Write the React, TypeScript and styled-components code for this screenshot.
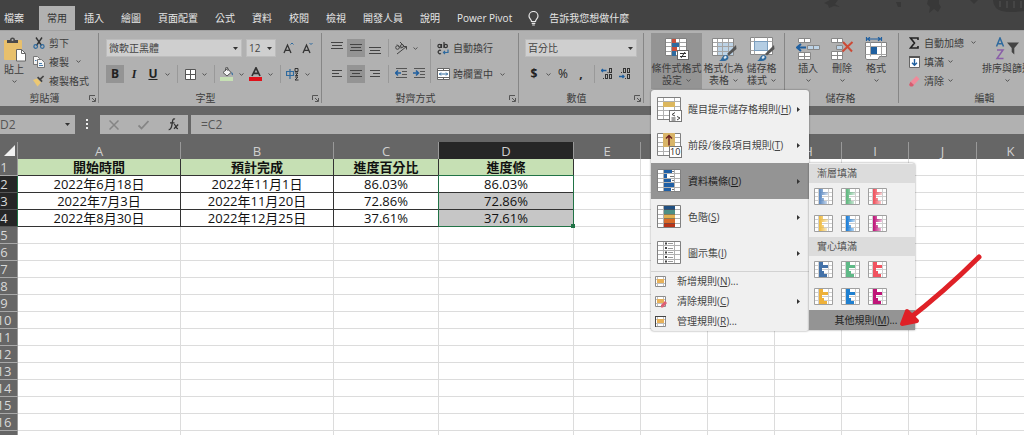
import React from 'react';
import styled, { createGlobalStyle } from 'styled-components';

const GlobalStyle = createGlobalStyle`
  *, *::before, *::after { box-sizing: border-box; }
  body {
    margin: 0;
    background: #fff;
    font-family: "Open Sans", "Noto Sans CJK TC", sans-serif;
    font-size: 10px;
    line-height: 12px;
    color: #3c3c3c;
  }
  button, input, select { font: inherit; color: inherit; }
  button { border: 0; padding: 0; background: none; white-space: nowrap; }
  svg { display: block; flex: none; }
`;

/* ---------- shell ---------- */

const Window = styled.div`
  display: flex;
  flex-direction: column;
  height: 100vh;
  overflow: hidden;
`;

const TabBar = styled.nav`
  display: flex;
  align-items: flex-end;
  flex: none;
  gap: 1px;
  height: 30px;
  background: #434343;
`;

const Tab = styled.button<{ $active?: boolean; $first?: boolean }>`
  flex: none;
  height: 24px;
  padding: 0 8px;
  padding-left: ${(p) => (p.$first ? '4px' : '8px')};
  margin-right: ${(p) => (p.$first ? '6px' : '0')};
  background: ${(p) => (p.$active ? '#b1b1b1' : 'transparent')};
  color: ${(p) => (p.$active ? '#333' : '#e6e6e6')};
`;

const TellMe = styled.button`
  display: flex;
  align-items: center;
  flex: none;
  gap: 10px;
  height: 24px;
  margin-left: 7px;
  color: #e6e6e6;
`;

const Doodles = styled.div`
  align-self: flex-start;
  margin-left: auto;
`;

/* ---------- ribbon ---------- */

const Ribbon = styled.div`
  display: flex;
  flex: none;
  height: 76px;
  border-top: 1px solid #a2a2a2;
  background: #b1b1b1;
`;

const GroupBox = styled.section<{ $width: number }>`
  position: relative;
  display: flex;
  flex-direction: column;
  flex: none;
  width: ${(p) => p.$width}px;
  &::after {
    content: "";
    position: absolute;
    top: 2px;
    right: 0;
    width: 1px;
    height: 70px;
    background: #868686;
  }
`;

const GroupBody = styled.div<{ $pad?: number }>`
  display: flex;
  height: 59px;
  padding: 2px 0 0 ${(p) => p.$pad ?? 0}px;
`;

const GroupFoot = styled.div`
  display: flex;
  align-items: center;
  height: 16px;
  padding-right: 3px;
`;

const GroupTitle = styled.span`
  flex: 1;
  text-align: center;
`;

const Launcher = styled.button`
  width: 7px;
  height: 7px;
`;

const Rows = styled.div`
  display: flex;
  flex-direction: column;
  gap: 8px;
  padding-top: 6px;
`;

const TightRows = styled.div<{ $indent?: boolean }>`
  display: flex;
  flex-direction: column;
  margin-left: ${(p) => (p.$indent ? '5px' : '0')};
`;

const Row = styled.div<{ $gap?: number }>`
  display: flex;
  align-items: center;
  height: 18px;
  gap: ${(p) => p.$gap ?? 0}px;
`;

const Tool = styled.button<{ $on?: boolean }>`
  display: flex;
  align-items: center;
  justify-content: center;
  width: 18px;
  height: 18px;
  background: ${(p) => (p.$on ? '#949494' : 'transparent')};
`;

const Glyph = styled.span<{ $kind?: 'bold' | 'italic' | 'under' }>`
  font-size: 12px;
  line-height: 14px;
  color: #222;
  font-weight: ${(p) => (p.$kind === 'bold' || p.$kind === 'under' ? 700 : 400)};
  font-style: ${(p) => (p.$kind === 'italic' ? 'italic' : 'normal')};
  font-family: ${(p) => (p.$kind === 'italic' ? '"Liberation Serif", serif' : 'inherit')};
  text-decoration: ${(p) => (p.$kind === 'under' ? 'underline' : 'none')};
`;

const DropButton = styled.button`
  display: flex;
  align-items: center;
  justify-content: center;
  width: 11px;
  height: 18px;
`;

const Divider = styled.i<{ $tall?: boolean }>`
  flex: none;
  width: 1px;
  height: ${(p) => (p.$tall ? '44px' : '18px')};
  margin: ${(p) => (p.$tall ? '6px 6px 0 2px' : '0 3px 0 4px')};
  background: #999;
`;

const LabelTool = styled.button<{ $h?: number }>`
  display: flex;
  align-items: center;
  gap: 4px;
  height: ${(p) => p.$h ?? 19}px;
`;

const IconSlot = styled.span`
  display: flex;
  justify-content: center;
  width: 12px;
`;

const BigTool = styled.button<{ $width: number; $on?: boolean }>`
  display: flex;
  flex-direction: column;
  align-items: center;
  flex: none;
  gap: 1px;
  width: ${(p) => p.$width}px;
  height: 56px;
  padding-top: 4px;
  background: ${(p) => (p.$on ? '#949494' : 'transparent')};
`;

const BigLabel = styled.span`
  display: flex;
  flex-direction: column;
  align-items: center;
`;

const LabelLine = styled.span`
  display: flex;
  align-items: center;
  justify-content: center;
  gap: 4px;
  height: 12px;
`;

const ComboBox = styled.span<{ $width: number }>`
  position: relative;
  display: flex;
  width: ${(p) => p.$width}px;
  height: 18px;
  select {
    appearance: none;
    width: 100%;
    height: 18px;
    padding: 0 12px 0 2px;
    border: 1px solid #bdbdbd;
    border-radius: 0;
    background: #cfcfcf;
    color: #444;
  }
  svg {
    position: absolute;
    right: 4px;
    top: 8px;
    pointer-events: none;
  }
`;

/* ---------- menus ---------- */

const MenuAnchor = styled.div`
  position: relative;
  z-index: 5;
`;

const Menu = styled.div`
  position: absolute;
  top: 57px;
  left: 0;
  width: 158px;
  padding-top: 1px;
  background: #f0f0f0;
  border-radius: 3px;
  box-shadow: 0 0 2px rgba(0, 0, 0, 0.5);
`;

const MenuRow = styled.div`
  position: relative;
`;

const MenuItem = styled.button<{ $small?: boolean; $on?: boolean }>`
  display: flex;
  align-items: center;
  width: 100%;
  height: ${(p) => (p.$small ? '20px' : '36px')};
  padding: ${(p) => (p.$small ? '0 9px 0 4px' : '0 9px 0 6px')};
  gap: ${(p) => (p.$small ? '10px' : '6px')};
  background: ${(p) => (p.$on ? '#949494' : 'transparent')};
  color: ${(p) => (p.$on ? '#1e1e1e' : '#444')};
`;

const MenuText = styled.span`
  flex: 1;
  text-align: left;
`;

const MenuLine = styled.hr`
  height: 1px;
  margin: 0 0 -1px;
  border: 0;
  background: #d2d2d2;
`;

const SubMenu = styled.div`
  position: absolute;
  top: 0;
  left: 100%;
  width: 106px;
  padding-top: 1px;
  background: #f0f0f0;
  border-radius: 0 3px 0 0;
  box-shadow: 0 0 2px rgba(0, 0, 0, 0.5);
`;

const SubTitle = styled.div`
  height: 19px;
  padding: 3px 8px;
  background: #dcdcdc;
  color: #555;
`;

const Swatches = styled.div`
  display: grid;
  grid-template-columns: repeat(3, 27px);
  grid-auto-rows: 27px;
  padding-left: 1px;
`;

const Swatch = styled.button`
  display: flex;
  align-items: center;
  justify-content: center;
`;

const MoreRules = styled.button`
  width: 100%;
  height: 20px;
  padding-left: 8px;
  background: #949494;
  color: #222;
`;

const Pointer = styled.svg`
  position: absolute;
  left: 88px;
  top: 88px;
  pointer-events: none;
`;

/* ---------- formula bar ---------- */

const FormulaBar = styled.div`
  display: flex;
  flex: none;
  align-items: center;
  height: 36px;
  border-bottom: 8px solid #666;
  border-top: 9px solid #666;
  background: #666;
`;

const NameBox = styled.label`
  display: flex;
  align-items: center;
  flex: none;
  width: 75px;
  height: 19px;
  padding-right: 5px;
  background: #b1b1b1;
  input {
    width: 62px;
    flex: 1;
    padding: 0;
    border: 0;
    background: transparent;
    font-size: 12px;
    color: #555;
  }
`;

const Grip = styled.span`
  display: flex;
  justify-content: center;
  flex: none;
  width: 25px;
`;

const FxBox = styled.div`
  display: flex;
  align-items: center;
  justify-content: space-around;
  flex: none;
  width: 88px;
  height: 19px;
  margin-right: 3px;
  background: #b1b1b1;
`;

const FormulaInput = styled.input`
  flex: 1;
  min-width: 0;
  height: 19px;
  padding: 0 10px;
  border: 0;
  border-radius: 0;
  background: #b1b1b1;
  font-size: 12px;
  color: #555;
`;

/* ---------- sheet ---------- */

const SheetArea = styled.main`
  flex: 1;
  min-height: 0;
  overflow: hidden;
`;

const Sheet = styled.table`
  width: 100%;
  min-width: 1045px;
  table-layout: fixed;
  border-collapse: separate;
  border-spacing: 0;
  font-size: 13px;
  line-height: 16px;
  th, td { padding: 0; height: 17px; white-space: nowrap; }
`;

const ColHead = styled.th<{ $on?: boolean }>`
  border-right: 1px solid #999;
  background: ${(p) => (p.$on ? '#262626' : '#666')};
  color: #d0d0d0;
  font-weight: 400;
`;

const Corner = styled.td`
  background: #666;
  border-right: 1px solid #999;
  svg { margin: 0 0 0 4px; }
`;

const RowHead = styled.th<{ $on?: boolean }>`
  border-right: 1px solid ${(p) => (p.$on ? '#217346' : '#999')};
  border-bottom: 1px solid ${(p) => (p.$on ? '#555' : '#a8a8a8')};
  background: ${(p) => (p.$on ? '#262626' : '#666')};
  color: #d8d8d8;
  font-weight: 400;
`;

const RowNumber = styled.span`
  display: flex;
  justify-content: center;
  width: 8px;
`;

const Cell = styled.td<{ $kind: 'blank' | 'head' | 'data' | 'picked' }>`
  position: relative;
  text-align: center;
  color: #111;
  font-weight: ${(p) => (p.$kind === 'head' ? 700 : 400)};
  border-right: 1px solid ${(p) => (p.$kind === 'blank' ? '#dcdcdc' : '#333')};
  border-bottom: 1px solid ${(p) => (p.$kind === 'blank' ? '#dcdcdc' : '#333')};
  background: ${(p) => ({ blank: '#fff', head: '#c6e0b4', data: '#fff', picked: '#c6c6c6' })[p.$kind]};
`;

const Selection = styled.div`
  position: absolute;
  z-index: 1;
  top: -1px;
  left: -1px;
  right: -1px;
  height: 52px;
  border: 1px solid #217346;
  &::after {
    content: "";
    position: absolute;
    right: -2px;
    bottom: -2px;
    width: 4px;
    height: 4px;
    background: #217346;
  }
`;

/* ---------- icons ---------- */

const Chevron = () => (
  <svg width="5" height="3" viewBox="0 0 5 3">
    <path d="M.5.500l2 1.800 2-1.800" fill="none" stroke="#555" />
  </svg>
);
const Caret = () => (
  <svg width="5" height="3" viewBox="0 0 5 3">
    <path d="M0 0h5L2.500 3z" fill="#333" />
  </svg>
);
const SubArrow = () => (
  <svg width="3" height="5" viewBox="0 0 3 5">
    <path d="M0 0v5l3-2.500z" fill="#333" />
  </svg>
);
const LaunchIcon = () => (
  <svg width="7" height="7" viewBox="0 0 7 7" fill="none" stroke="#555">
    <path d="M.5 5V.5H6M3 3l3 3M6.500 3v3.500H3" />
  </svg>
);
const Bulb = () => (
  <svg width="11" height="15" viewBox="0 0 11 15" fill="none" stroke="#e6e6e6" strokeWidth="1.200">
    <path d="M3.500 10.500C3.500 8.500 1 7.800 1 5a4.500 4.500 0 019 0c0 2.800-2.500 3.500-2.500 5.500zM3.700 12.300h3.600M4.200 14h2.600" />
  </svg>
);
const PasteIcon = () => (
  <svg width="23" height="25" viewBox="0 0 23 25">
    <rect x="1" y="3" width="18" height="20" rx="1" fill="#e8c06c" />
    <path d="M4 6V3h3a2.500 2.500 0 015 0h3v3z" fill="#4a4a4a" />
    <circle cx="9.500" cy="3" r="1" fill="#b1b1b1" />
    <path d="M13.500 12.500h5l4 4v7.500h-9z" fill="#fff" stroke="#666" />
    <path d="M18.500 12.500v4h4" fill="none" stroke="#666" />
  </svg>
);
const CutIcon = () => (
  <svg width="12" height="12" viewBox="0 0 12 12" fill="none">
    <path d="M3 .5l5.500 8M9 .5l-5.500 8" stroke="#333" strokeWidth="1.400" />
    <circle cx="2.700" cy="9.500" r="1.800" stroke="#2f6a9e" strokeWidth="1.200" />
    <circle cx="9.300" cy="9.500" r="1.800" stroke="#2f6a9e" strokeWidth="1.200" />
  </svg>
);
const CopyIcon = () => (
  <svg width="12" height="12" viewBox="0 0 12 12" fill="#f4f4f4" stroke="#777">
    <path d="M.5.500h4l2 2v6h-6z" />
    <path d="M4.500 3.500h4l3 3v5h-7z" />
    <path d="M6 7.500h3M6 9.500h4M2 4.500h1.500" stroke="#4a7fb0" />
  </svg>
);
const PainterIcon = () => (
  <svg width="12" height="12" viewBox="0 0 12 12">
    <path d="M0 5l4-1.500 4 4L4.500 11.500z" fill="#ecc873" />
    <path d="M4 2.800l4.500 4.500 1.200-1.200-1.500-1.600 3-3L10 .4 7 3.200 5.200 1.600z" fill="#444" />
  </svg>
);
const GrowA = ({ up }: { up?: boolean }) => (
  <svg width="12" height="12" viewBox="0 0 12 12" fill="none">
    <path d="M1 11L4.500 3 8 11M2.300 8.300h4.400" stroke="#333" strokeWidth="1.300" />
    <path d={up ? 'M7.500 2.500L9 1l1.500 1.500' : 'M7.500 1L9 2.500 10.500 1'} stroke="#2f6a9e" />
  </svg>
);
const BorderIcon = () => (
  <svg width="11" height="11" viewBox="0 0 11 11">
    <path d="M.5.500h10v10H.5zM5.500.500v10M.5 5.500h10" fill="#fff" stroke="#555" />
  </svg>
);
const FillIcon = () => (
  <svg width="14" height="14" viewBox="0 0 14 14">
    <rect y="10" width="13" height="4" fill="#c6e0b4" />
    <path d="M3 5.500L7.500 1.500 11 5.500 7 9z" fill="#f4f4f4" stroke="#555" />
    <path d="M5.500 4V1.500a1.200 1.200 0 012.400 0v2.500" fill="none" stroke="#555" />
    <path d="M11.500 4.500q2 2 1 4-1.500-1-1-4z" fill="#2f6a9e" />
  </svg>
);
const FontColorIcon = () => (
  <svg width="14" height="14" viewBox="0 0 14 14">
    <path d="M3 9L7 .8 11 9M4.500 6.300h5" fill="none" stroke="#333" strokeWidth="1.700" />
    <rect x="0" y="10" width="13" height="4" fill="#e0111a" />
  </svg>
);
const PhoneticIcon = () => (
  <svg width="14" height="14" viewBox="0 0 14 14" fill="none">
    <path d="M.5 4.500h7v4h-7zM4 2v10" stroke="#2f6a9e" strokeWidth="1.200" />
    <path d="M9 1.500h3v3H9zM9 6h3L9.500 8.500H12M9 10h3l-3 3h3.500" stroke="#333" />
  </svg>
);
const Lines = ({ rows }: { rows: [number, number, number][] }) => (
  <svg width="12" height="12" viewBox="0 0 12 12" stroke="#444">
    {rows.map(([y, a, b]) => (
      <path key={y} d={`M${a} ${y}.5H${b}`} />
    ))}
  </svg>
);
const OrientIcon = () => (
  <svg width="14" height="14" viewBox="0 0 14 14" fill="none" stroke="#444">
    <path d="M3 13L12.500 5.500M9.500 5.500h3v3" />
    <circle cx="3.500" cy="6.500" r="1.800" />
    <path d="M3 3.500l4 4M6 1l4 4" />
    <circle cx="8" cy="5" r="1.500" />
  </svg>
);
const IndentIcon = ({ right }: { right?: boolean }) => (
  <svg width="13" height="12" viewBox="0 0 13 12" fill="none">
    <path d="M1 .5h11M7 3.500h5M7 6.500h5M1 9.500h11" stroke="#555" />
    <path d={right ? 'M0 5h5M3 2.500L5.500 5 3 7.500' : 'M6 5H1M3 2.500L.5 5 3 7.500'} stroke="#1f5f9f" strokeWidth="1.500" />
  </svg>
);
const WrapIcon = () => (
  <svg width="12" height="13" viewBox="0 0 12 13" fill="none" stroke="#333" strokeWidth="1.200">
    <circle cx="2.500" cy="4" r="1.600" />
    <path d="M4.500 2v4M7 0v6" />
    <circle cx="8.800" cy="4" r="1.600" />
    <path d="M4 8.500a1.800 1.800 0 100 3" />
    <path d="M11 7.500v3H6.500M8 9L6.500 10.500 8 12" stroke="#2f6a9e" />
  </svg>
);
const MergeIcon = () => (
  <svg width="13" height="12" viewBox="0 0 13 12" fill="#fff">
    <path d="M.5.500h12v11H.5zM.5 2.500h12M.5 9.500h12M6.500.500v2M6.500 9.500v2" stroke="#666" />
    <path d="M2 6h9M4 4.500L2.500 6 4 7.500M9 4.500L10.500 6 9 7.500" fill="none" stroke="#2f6a9e" />
  </svg>
);
const DecimalIcon = ({ less }: { less?: boolean }) => (
  <svg width="12" height="12" viewBox="0 0 12 12" fill="none" stroke="#333">
    <rect x="8.500" y=".5" width="2" height="4" />
    {less ? <rect x="4.500" y=".5" width="2" height="4" /> : <rect x="4.500" y="6.500" width="2" height="4" />}
    <rect x="8.500" y="6.500" width="2" height="4" />
    <path d={less ? 'M0 8.500h5M3.500 7L5 8.500 3.500 10' : 'M5.500 2.500H.5M2 1L.5 2.500 2 4'} stroke="#1f5f9f" strokeWidth="1.300" />
    <path d={less ? 'M2 4.500h1M6 10.500h1' : 'M6.500 4.500h1M2 10.500h1'} />
  </svg>
);

const CondIcon = () => (
  <svg width="24" height="24" viewBox="0 0 24 24">
    <path d="M.5 1.500h21v17H.5z" fill="#fff" />
    <path d="M.5 5.500h21M.5 9.500h21M.5 14.500h21M6.500 1.500v17M14.500 1.500v17" fill="none" stroke="#a0a0a0" />
    <path d="M.5 1.500h21v17H.5z" fill="none" stroke="#808080" />
    <path d="M7 2h4v4H7zM7 10h5v4H7z" fill="#c8503c" />
    <path d="M7 6h7v4H7zM7 14h4v5H7z" fill="#2f6a9e" />
    <rect x="12.500" y="13.500" width="11" height="9" fill="#fff" stroke="#666" />
    <path d="M15 16.500h6M15 19.500h6M20 15l-4 6" stroke="#333" />
  </svg>
);
const Brush = () => (
  <>
    <path d="M25 8l-9 9 2 1.500L25.500 12z" fill="#555" />
    <path d="M8 24c3-1 3-6 6.500-6 3 0 4 3 1.500 5-2 1.500-5 1-8 1z" fill="#2f6a9e" />
    <path d="M14 18.500l2 1.500-2 2-1.500-1z" fill="#dfe9f2" />
  </>
);
const TableIcon = () => (
  <svg width="26" height="24" viewBox="0 0 26 24">
    <path d="M1.500 1.500h21v17h-21z" fill="#fff" />
    <path d="M7 6h15v12H7z" fill="#bdd3e6" />
    <path d="M1.500 5.500h21M1.500 9.500h21M1.500 14.500h21M6.500 1.500v17M11.500 1.500v17M17.500 1.500v17" fill="none" stroke="#a4a4a4" />
    <path d="M1.500 1.500h21v17h-21z" fill="none" stroke="#888" />
    <Brush />
  </svg>
);
const StyleIcon = () => (
  <svg width="26" height="24" viewBox="0 0 26 24">
    <path d="M1.500.500h22v17h-22z" fill="#fff" stroke="#888" />
    <path d="M1.500 4.500h22M1.500 13.500h22M5.500.500v17M18.500.500v17" fill="none" stroke="#a4a4a4" />
    <rect x="5.500" y="4.500" width="13" height="9" fill="#b4cde3" stroke="#7a9dbd" />
    <Brush />
  </svg>
);
const InsertIcon = () => (
  <svg width="24" height="24" viewBox="0 0 24 24" fill="#fff" stroke="#888">
    <path d="M2.500 1.500h12v4h-12zM8.500 1.500v4M2.500 15.500h12v7h-12zM8.500 15.500v7M2.500 19.500h12" />
    <path d="M11.500 8.500h12v4h-12zM17.500 8.500v4" fill="#bdd3e6" />
    <path d="M10 10.500H1M5 7l-4 3.500L5 14" fill="none" stroke="#1f5f9f" strokeWidth="2" />
  </svg>
);
const DeleteIcon = () => (
  <svg width="24" height="24" viewBox="0 0 24 24" fill="#fff" stroke="#888">
    <path d="M1.500 1.500h11v4h-11zM7.500 1.500v4M1.500 14.500h11v8h-11zM7.500 14.500v8M1.500 18.500h11" />
    <path d="M6.500 8.500h6v4h-6z" fill="#bdd3e6" />
    <path d="M13 5l9 9.500M22.500 5L12.500 14.500" fill="none" stroke="#cc4a36" strokeWidth="2" />
  </svg>
);
const FormatIcon = () => (
  <svg width="24" height="24" viewBox="0 0 24 24">
    <path d="M2.500 0v4M17.500 0v4M3 2h14M6 .3L3.500 2 6 3.700M14 .3L16.500 2 14 3.700" fill="none" stroke="#1f5f9f" strokeWidth="1.200" />
    <path d="M1.500 5.500h21v14h-7l-1.500 3H3l-1.500-1z" fill="#fff" stroke="#808080" />
    <path d="M1.500 9.500h21M1.500 17.500h21M6.500 5.500v14M17.500 5.500v14" fill="none" stroke="#a4a4a4" />
    <rect x="7" y="10" width="6" height="7" fill="#1f5f9f" />
  </svg>
);
const SigmaIcon = () => (
  <svg width="10" height="12" viewBox="0 0 10 12">
    <path d="M9 3V1H1.500L5.500 6 1.500 11H9V9" fill="none" stroke="#222" strokeWidth="1.600" />
  </svg>
);
const FillDownIcon = () => (
  <svg width="11" height="12" viewBox="0 0 11 12">
    <path d="M.5.500h10v11H.5z" fill="#fff" stroke="#666" />
    <path d="M0 1h11" stroke="#555" strokeWidth="2" />
    <path d="M5.500 3v6M3 6.800L5.500 9.300 8 6.800" fill="none" stroke="#1f5f9f" strokeWidth="1.400" />
  </svg>
);
const EraserIcon = () => (
  <svg width="11" height="12" viewBox="0 0 11 12">
    <path d="M7.500 1L10.500 4 5 10 1.500 6.800z" fill="#ef8a9a" />
    <path d="M1.500 6.800L5 10 3.500 11.500H1.500L0 10z" fill="#d95b6f" />
  </svg>
);
const SortIcon = () => (
  <svg width="24" height="24" viewBox="0 0 24 24" fill="none">
    <path d="M1.500 9.500L5 1l3.500 8.500M2.700 6.800h4.600" stroke="#2f6a9e" strokeWidth="1.500" />
    <path d="M2 13h6L2 21.500h6.500" stroke="#8a5fa8" strokeWidth="1.500" />
    <path d="M12 5.500h12l-4.700 5.500v6.500L16.700 15V11z" fill="#444" />
  </svg>
);

const MenuGrid = ({ children }: { children?: React.ReactNode }) => (
  <svg width="25" height="25" viewBox="0 0 25 25">
    <path d="M.5.500h23v22H.5z" fill="#fff" />
    <path d="M.5 4.500h23M.5 9.500h23M.5 13.500h23M.5 18.500h23M6.500.500v22M17.500.500v22" fill="none" stroke="#b0b0b0" />
    <path d="M.5.500h23v22H.5z" fill="none" stroke="#808080" />
    {children}
  </svg>
);
const HighlightIcon = () => (
  <MenuGrid>
    <rect x="6" y="5" width="12" height="5" fill="#dcb75e" />
    <rect x="12.500" y="13.500" width="12" height="11" fill="#fff" stroke="#777" />
    <path d="M18 15.500L15 17.500l3 1.500M20 19.500l3 1.500-3 2M14.500 21h4M14.500 23h4" fill="none" stroke="#444" />
  </MenuGrid>
);
const NumberTen = styled.text`
  font: 9px "Open Sans", sans-serif;
  fill: #222;
`;
const TopIcon = () => (
  <MenuGrid>
    <rect x="6" y="0" width="12" height="14" fill="#d9b568" />
    <path d="M12 12.500V2.500M9 5.500l3-3 3 3" fill="none" stroke="#6b2020" strokeWidth="1.500" />
    <rect x="12.500" y="13.500" width="12" height="11" fill="#fff" stroke="#777" />
    <NumberTen x="13" y="22">10</NumberTen>
  </MenuGrid>
);
const BarsIcon = () => (
  <MenuGrid>
    <path d="M7 1h8v3H7zM7 5h3v4H7zM7 10h7v3H7zM7 14h10v4H7zM7 19h7v3H7z" fill="#1f5fa5" />
    <path d="M15 2.500h2M13 7.500h4M15 11.500h2M15 20.500h2" stroke="#777" />
  </MenuGrid>
);
const ScaleIcon = () => (
  <MenuGrid>
    <path d="M7 1h11v4H7z" fill="#1f4f80" />
    <path d="M7 5h11v4H7z" fill="#4d8f86" />
    <path d="M7 9h11v5H7z" fill="#e0b050" />
    <path d="M7 14h11v4H7z" fill="#d96a28" />
    <path d="M7 18h11v4H7z" fill="#b83418" />
    <path d="M7 4.500h11M7 9.500h11M7 13.500h11M7 18.500h11" stroke="#555" strokeOpacity=".6" />
  </MenuGrid>
);
const SetIcon = () => (
  <MenuGrid>
    <path d="M8 2.500h2M8 7h2M8 11.500h2M8 16h2M8 20.500h2" stroke="#444" strokeWidth="2" />
    <path d="M11 2.500h5M11 7.500h5M11 11.500h5M11 16.500h5M11 20.500h5" stroke="#999" />
  </MenuGrid>
);
const RuleIcon = ({ kind }: { kind: 'new' | 'clear' | 'manage' }) => (
  <svg width="12" height="13" viewBox="0 0 12 13">
    <path d="M.5 1.500h10v10H.5z" fill="#fff" />
    <path d="M.5 4.500h10M.5 8.500h10M2.500 1.500v10M8.500 1.500v10" fill="none" stroke="#c0c0c0" />
    <path d="M.5 1.500h10v10H.5z" fill="none" stroke="#8c8c8c" />
    <rect x="2" y="4" width="7" height="4" fill="#e8b25a" />
    {kind === 'clear' && <path d="M6 10l4-4 2 2-4 4.500H6z" fill="#dd5f72" />}
    {kind === 'manage' && <path d="M.5 1v11M0 1.500h11" stroke="#444" />}
  </svg>
);

const DataBars = ({ color, fade }: { color: string; fade?: boolean }) => {
  const id = `fade-${color.slice(1)}`;
  return (
    <svg width="19" height="17" viewBox="0 0 19 17">
      <defs>
        <linearGradient id={id} gradientUnits="userSpaceOnUse" x1="5" x2="14" y1="0" y2="0">
          <stop offset=".1" stopColor={color} />
          <stop offset="1" stopColor={color} stopOpacity="0.250" />
        </linearGradient>
      </defs>
      <path d="M.5.500h18v16H.5z" fill="#fff" />
      <path d="M.5 4.500h18M.5 8.500h18M.5 12.500h18M4.500.500v16M14.500.500v16" fill="none" stroke="#cfcfcf" />
      <path d="M.5.500h18v16H.5z" fill="none" stroke="#a0a0a0" />
      <path
        d="M5 1h4v3H5zM5 4h9v3H5zM5 7h3v3H5zM5 10h5v3H5zM5 13h8v3H5z"
        fill={fade ? `url(#${id})` : color}
      />
    </svg>
  );
};

/* ---------- data ---------- */

const tabs = ['檔案', '常用', '插入', '繪圖', '頁面配置', '公式', '資料', '校閱', '檢視', '開發人員', '說明', 'Power Pivot'];

const columns = [
  { name: 'A', width: 163 },
  { name: 'B', width: 153 },
  { name: 'C', width: 105 },
  { name: 'D', width: 135 },
  { name: 'E', width: 67 },
  { name: 'F', width: 67 },
  { name: 'G', width: 67 },
  { name: 'H', width: 67 },
  { name: 'I', width: 67 },
  { name: 'J', width: 68 },
  { name: 'K', width: undefined },
];

const records = [
  ['開始時間', '預計完成', '進度百分比', '進度條'],
  ['2022年6月18日', '2022年11月1日', '86.03%', '86.03%'],
  ['2022年7月3日', '2022年11月20日', '72.86%', '72.86%'],
  ['2022年8月30日', '2022年12月25日', '37.61%', '37.61%'],
];

const rowNumbers = Array.from({ length: 17 }, (_, i) => i + 1);
const barColors = ['#4472a8', '#5fb987', '#f0525f', '#eeb13a', '#1f80d0', '#bf1478'];
const fadeColors = ['#5f8cc4', '#63b982', '#f05560', '#efbd45', '#2080d8', '#c0187c'];

const cellKind = (row: number, col: number) => {
  if (row > 4 || col > 3) return 'blank' as const;
  if (row === 1) return 'head' as const;
  return col === 3 && row > 2 ? ('picked' as const) : ('data' as const);
};

/* ---------- pieces ---------- */

const Group = ({ title, width, pad, launcher, children }: {
  title: string;
  width: number;
  pad?: number;
  launcher?: boolean;
  children: React.ReactNode;
}) => (
  <GroupBox $width={width} aria-label={title}>
    <GroupBody $pad={pad}>{children}</GroupBody>
    <GroupFoot>
      <GroupTitle>{title}</GroupTitle>
      {launcher && (
        <Launcher aria-label={`${title}設定`}>
          <LaunchIcon />
        </Launcher>
      )}
    </GroupFoot>
  </GroupBox>
);

const Drop = ({ label }: { label: string }) => (
  <DropButton aria-label={label}>
    <Chevron />
  </DropButton>
);

const Combo = ({ label, value, width }: { label: string; value: string; width: number }) => (
  <ComboBox $width={width}>
    <select aria-label={label} defaultValue={value}>
      <option>{value}</option>
    </select>
    <Caret />
  </ComboBox>
);

const Big = ({ icon, lines, width, on }: { icon: React.ReactNode; lines: string[]; width: number; on?: boolean }) => (
  <BigTool $width={width} $on={on}>
    {icon}
    <BigLabel>
      <LabelLine>{lines[0]}</LabelLine>
      <LabelLine>
        {lines[1]}
        <Chevron />
      </LabelLine>
    </BigLabel>
  </BigTool>
);

const Item = ({ icon, text, hot, tail = '', small, on, more }: {
  icon: React.ReactNode;
  text: string;
  hot: string;
  tail?: string;
  small?: boolean;
  on?: boolean;
  more?: boolean;
}) => (
  <MenuItem role="menuitem" $small={small} $on={on}>
    {icon}
    <MenuText>
      {text}(<u>{hot}</u>){tail}
    </MenuText>
    {more && <SubArrow />}
  </MenuItem>
);

const BarsSubMenu = () => (
  <SubMenu role="menu">
    <SubTitle>漸層填滿</SubTitle>
    <Swatches>
      {fadeColors.map((c) => (
        <Swatch key={c} aria-label="漸層資料橫條">
          <DataBars color={c} fade />
        </Swatch>
      ))}
    </Swatches>
    <SubTitle>實心填滿</SubTitle>
    <Swatches>
      {barColors.map((c) => (
        <Swatch key={c} aria-label="實心資料橫條">
          <DataBars color={c} />
        </Swatch>
      ))}
    </Swatches>
    <MoreRules role="menuitem">
      其他規則(<u>M</u>)...
    </MoreRules>
    <Pointer width="90" height="80" viewBox="0 0 90 80" fill="none" stroke="#df2127" strokeLinecap="round" strokeLinejoin="round">
      <path d="M82 6Q48 40 8 71" strokeWidth="5" />
      <path d="M10 60L5 73l15-3z" strokeWidth="4" fill="#df2127" />
    </Pointer>
  </SubMenu>
);

const ConditionalMenu = () => (
  <Menu role="menu">
    <Item icon={<HighlightIcon />} text="醒目提示儲存格規則" hot="H" more />
    <Item icon={<TopIcon />} text="前段/後段項目規則" hot="T" more />
    <MenuRow>
      <Item icon={<BarsIcon />} text="資料橫條" hot="D" more on />
      <BarsSubMenu />
    </MenuRow>
    <Item icon={<ScaleIcon />} text="色階" hot="S" more />
    <Item icon={<SetIcon />} text="圖示集" hot="I" more />
    <MenuLine />
    <Item small icon={<RuleIcon kind="new" />} text="新增規則" hot="N" tail="..." />
    <Item small icon={<RuleIcon kind="clear" />} text="清除規則" hot="C" more />
    <Item small icon={<RuleIcon kind="manage" />} text="管理規則" hot="R" tail="..." />
  </Menu>
);

export default function App() {
  return (
    <Window>
      <GlobalStyle />
      <TabBar>
        {tabs.map((t, i) => (
          <Tab key={t} $first={i === 0} $active={t === '常用'}>
            {t}
          </Tab>
        ))}
        <TellMe>
          <Bulb />
          告訴我您想做什麼
        </TellMe>
        <Doodles>
          <svg width="204" height="14" viewBox="0 0 204 14" fill="#383838">
            <path d="M4 3l6-3h8l-3 4 5 3-6-1-5 2-1-3zM76 2h5v5h-3zM108 0h11v4l2 3-3 5-4-3-5 4 1-6-3-3zM150 0h8l-4 4zM173 0h31v11q-22 3-28-3-3-4-3-8z" />
            <path d="M180 1v6M187 1v7M194 1v7M201 1v7" stroke="#454545" strokeWidth="2" />
          </svg>
        </Doodles>
      </TabBar>

      <Ribbon>
        <Group title="剪貼簿" width={99} launcher>
          <Big icon={<PasteIcon />} lines={['貼上', '']} width={28} />
          <TightRows $indent>
            <LabelTool><IconSlot><CutIcon /></IconSlot>剪下</LabelTool>
            <LabelTool><IconSlot><CopyIcon /></IconSlot>複製 <Drop label="複製選項" /></LabelTool>
            <LabelTool><IconSlot><PainterIcon /></IconSlot>複製格式</LabelTool>
          </TightRows>
        </Group>

        <Group title="字型" width={223} pad={7} launcher>
          <Rows>
            <Row $gap={4}>
              <Combo label="字型" value="微軟正黑體" width={136} />
              <Combo label="字型大小" value="12" width={30} />
              <Row $gap={1}>
                <Tool aria-label="放大字型"><GrowA up /></Tool>
                <Tool aria-label="縮小字型"><GrowA /></Tool>
              </Row>
            </Row>
            <Row>
              <Row $gap={1}>
                <Tool $on><Glyph $kind="bold">B</Glyph></Tool>
                <Tool><Glyph $kind="italic"><b>I</b></Glyph></Tool>
                <Tool><Glyph $kind="under">U</Glyph></Tool>
              </Row>
              <Drop label="底線選項" />
              <Divider />
              <Tool aria-label="框線"><BorderIcon /></Tool>
              <Drop label="框線選項" />
              <Divider />
              <Tool aria-label="填滿色彩"><FillIcon /></Tool>
              <Drop label="填滿色彩選項" />
              <Tool aria-label="字型色彩"><FontColorIcon /></Tool>
              <Drop label="字型色彩選項" />
              <Divider />
              <Tool aria-label="注音標示"><PhoneticIcon /></Tool>
              <Drop label="注音選項" />
            </Row>
          </Rows>
        </Group>

        <Group title="對齊方式" width={197} pad={6} launcher>
          <Rows>
            <Row>
              <Row $gap={1}>
                <Tool aria-label="靠上"><Lines rows={[[0, 0, 12], [3, 1, 11], [6, 0, 12]]} /></Tool>
                <Tool $on aria-label="置中對齊"><Lines rows={[[2, 0, 12], [5, 1, 11], [8, 0, 12]]} /></Tool>
                <Tool aria-label="靠下"><Lines rows={[[5, 0, 12], [8, 1, 11], [11, 0, 12]]} /></Tool>
              </Row>
              <Divider />
              <Tool aria-label="方向"><OrientIcon /></Tool>
              <Drop label="方向選項" />
            </Row>
            <Row>
              <Row $gap={1}>
                <Tool aria-label="靠左"><Lines rows={[[2, 1, 11], [5, 1, 8], [8, 1, 11]]} /></Tool>
                <Tool $on aria-label="置中"><Lines rows={[[2, 0, 12], [5, 2, 10], [8, 0, 12]]} /></Tool>
                <Tool aria-label="靠右"><Lines rows={[[2, 1, 11], [5, 4, 11], [8, 1, 11]]} /></Tool>
              </Row>
              <Divider />
              <Tool aria-label="減少縮排"><IndentIcon /></Tool>
              <Tool aria-label="增加縮排"><IndentIcon right /></Tool>
            </Row>
          </Rows>
          <Divider $tall />
          <Rows>
            <LabelTool $h={18}><IconSlot><WrapIcon /></IconSlot>自動換行</LabelTool>
            <Row $gap={4}>
              <LabelTool $h={18}><IconSlot><MergeIcon /></IconSlot>跨欄置中</LabelTool>
              <Drop label="跨欄置中選項" />
            </Row>
          </Rows>
        </Group>

        <Group title="數值" width={125} pad={6} launcher>
          <Rows>
            <Combo label="數值格式" value="百分比" width={112} />
            <Row>
              <Tool><Glyph $kind="bold">$</Glyph></Tool>
              <Drop label="會計格式" />
              <Tool><Glyph>%</Glyph></Tool>
              <Tool><Glyph $kind="bold">,</Glyph></Tool>
              <Divider />
              <Tool aria-label="增加小數位數"><DecimalIcon /></Tool>
              <Tool aria-label="減少小數位數"><DecimalIcon less /></Tool>
            </Row>
          </Rows>
        </Group>

        <Group title="樣式" width={141} pad={7}>
          <MenuAnchor>
            <Big on icon={<CondIcon />} lines={['條件式格式', '設定']} width={51} />
            <ConditionalMenu />
          </MenuAnchor>
          <Big icon={<TableIcon />} lines={['格式化為', '表格']} width={43} />
          <Big icon={<StyleIcon />} lines={['儲存格', '樣式']} width={33} />
        </Group>

        <Group title="儲存格" width={114} pad={6}>
          <Big icon={<InsertIcon />} lines={['插入', '']} width={34} />
          <Big icon={<DeleteIcon />} lines={['刪除', '']} width={34} />
          <Big icon={<FormatIcon />} lines={['格式', '']} width={34} />
        </Group>

        <Group title="編輯" width={174} pad={9}>
          <TightRows>
            <LabelTool><IconSlot><SigmaIcon /></IconSlot>自動加總 <Drop label="自動加總選項" /></LabelTool>
            <LabelTool><IconSlot><FillDownIcon /></IconSlot>填滿<Chevron /></LabelTool>
            <LabelTool><IconSlot><EraserIcon /></IconSlot>清除<Chevron /></LabelTool>
          </TightRows>
          <Big icon={<SortIcon />} lines={['排序與篩選', '']} width={56} />
        </Group>
      </Ribbon>

      <FormulaBar>
        <NameBox>
          <input aria-label="名稱方塊" defaultValue="D2" />
          <Caret />
        </NameBox>
        <Grip>
          <svg width="3" height="11" viewBox="0 0 3 11" fill="#eee">
            <path d="M0 0h2v2H0zM0 4h2v2H0zM0 8h2v2H0z" />
          </svg>
        </Grip>
        <FxBox>
          <button aria-label="取消">
            <svg width="10" height="10" viewBox="0 0 10 10" stroke="#858585" strokeWidth="1.500"><path d="M.5.500l9 9M9.500.500l-9 9" /></svg>
          </button>
          <button aria-label="輸入">
            <svg width="11" height="10" viewBox="0 0 11 10" fill="none" stroke="#858585" strokeWidth="1.800"><path d="M.5 5.500l3 3 7-7.500" /></svg>
          </button>
          <button aria-label="插入函數">
            <svg width="11" height="13" viewBox="0 0 11 13" fill="none" stroke="#333" strokeWidth="1.300"><path d="M7 1.200C5 .2 4.700 2 4.300 4.500S3.500 12 .7 11.500M2 4.800h4.500M6 6.500c1.500-.5 1.800 4.500 4 4M10.200 6.500L6 10.700" /></svg>
          </button>
        </FxBox>
        <FormulaInput aria-label="資料編輯列" defaultValue="=C2" />
      </FormulaBar>

      <SheetArea>
        <Sheet>
          <colgroup>
            <col width={18} />
            {columns.map((c) => (
              <col key={c.name} width={c.width} />
            ))}
          </colgroup>
          <thead>
            <tr>
              <Corner>
                <svg width="12" height="11" viewBox="0 0 12 11"><path d="M11 0v11H0z" fill="#f2f2f2" /></svg>
              </Corner>
              {columns.map((c) => (
                <ColHead key={c.name} $on={c.name === 'D'} scope="col">{c.name}</ColHead>
              ))}
            </tr>
          </thead>
          <tbody>
            {rowNumbers.map((n) => (
              <tr key={n}>
                <RowHead $on={n > 1 && n < 5} scope="row">
                  <RowNumber>{n}</RowNumber>
                </RowHead>
                {columns.map((c, i) => (
                  <Cell key={c.name} $kind={cellKind(n, i)}>
                    {records[n - 1]?.[i]}
                    {n === 2 && c.name === 'D' && <Selection />}
                  </Cell>
                ))}
              </tr>
            ))}
          </tbody>
        </Sheet>
      </SheetArea>
    </Window>
  );
}
